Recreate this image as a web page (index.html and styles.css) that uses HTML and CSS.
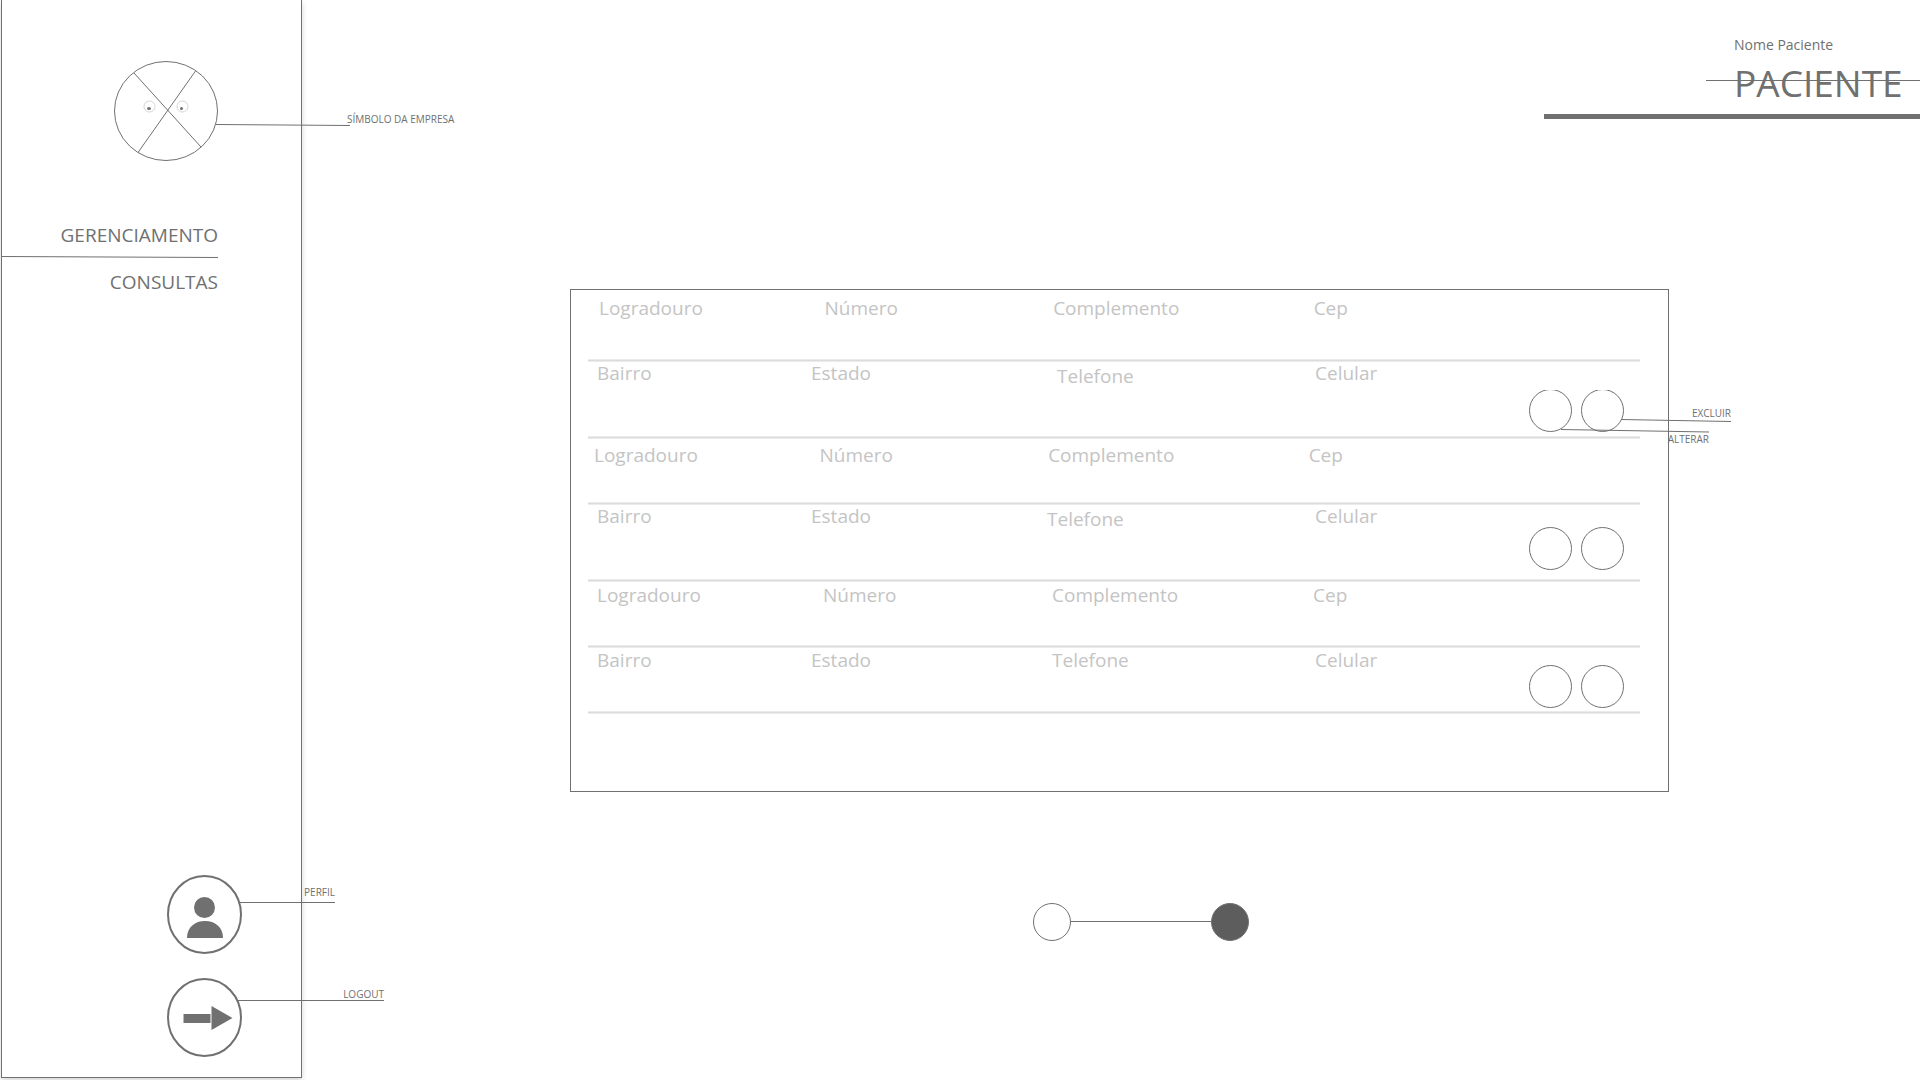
FILE: index.html
```html
<!DOCTYPE html>
<html lang="pt-BR">
<head>
<meta charset="utf-8">
<meta name="viewport" content="width=device-width, initial-scale=1">
<title>Paciente</title>
<link rel="stylesheet" href="styles.css">
</head>
<body>
<aside class="sidebar">
  <div class="brand">
    <svg class="brand-logo" width="104" height="100" viewBox="0 0 104 100" aria-hidden="true">
      <ellipse cx="52" cy="50" rx="51.5" ry="49.5"/>
      <path d="M20 12L87 86M81.500 10L24 91.500"/>
      <circle class="eye" cx="35.500" cy="45.500" r="5.500"/>
      <circle class="eye" cx="68.500" cy="45.500" r="5.500"/>
      <ellipse class="pupil" cx="35" cy="47.500" rx="2" ry="1.500"/>
      <circle class="pupil" cx="67.500" cy="47.500" r="1.500"/>
    </svg>
    <div class="callout callout-brand">
      <svg width="134" height="2" aria-hidden="true"><path d="M0 .5L134 1.500"/></svg>
      <span class="callout-text">SÍMBOLO DA EMPRESA</span>
    </div>
  </div>
  <nav class="menu">
    <a href="#gerenciamento">GERENCIAMENTO</a>
    <svg class="menu-line" viewBox="0 0 216 2" preserveAspectRatio="none" aria-hidden="true"><path d="M0 .5L216 1.500"/></svg>
    <a href="#consultas">CONSULTAS</a>
  </nav>
  <div class="account">
    <div class="account-item">
      <button class="account-button" type="button" aria-label="Perfil">
        <svg width="75" height="79" viewBox="0 0 75 79" aria-hidden="true">
          <ellipse class="ring" cx="37.500" cy="39.500" rx="36.500" ry="38.500"/>
          <circle cx="37.500" cy="32.500" r="10.500"/>
          <path d="M20 63C20 52 28 46 38 46S56 52 56 63Z"/>
        </svg>
      </button>
      <div class="callout callout-profile">
        <svg width="95" height="1" aria-hidden="true"><path d="M0 .5H95"/></svg>
        <span class="callout-text">PERFIL</span>
      </div>
    </div>
    <div class="account-item">
      <button class="account-button" type="button" aria-label="Logout">
        <svg width="75" height="79" viewBox="0 0 75 79" aria-hidden="true">
          <ellipse class="ring" cx="37.500" cy="39.500" rx="36.500" ry="38.500"/>
          <path d="M16.500 36H43.500V45H16.500ZM44.500 28L65.500 40L44.500 52Z"/>
        </svg>
      </button>
      <div class="callout callout-logout">
        <svg width="146" height="1" aria-hidden="true"><path d="M0 .5H146"/></svg>
        <span class="callout-text">LOGOUT</span>
      </div>
    </div>
  </div>
</aside>
<main class="main">
  <header class="header">
    <p class="patient-name">Nome Paciente</p>
    <h1 class="title">PACIENTE</h1>
  </header>
  <section class="panel" aria-label="Endereços">
    <div class="row address first"><span>Logradouro</span><span>Número</span><span>Complemento</span><span>Cep</span></div>
    <div class="row contact first">
      <span>Bairro</span><span>Estado</span><span class="phone">Telefone</span><span>Celular</span>
      <div class="actions">
        <button type="button" aria-label="Alterar"></button>
        <button type="button" aria-label="Excluir"></button>
        <div class="callout callout-delete">
          <svg width="110" height="3" aria-hidden="true"><path d="M0 .5L110 2.500"/></svg>
          <span class="callout-text">EXCLUIR</span>
        </div>
        <div class="callout callout-edit">
          <svg width="148" height="4" aria-hidden="true"><path d="M0 .5L148 3"/></svg>
          <span class="callout-text">ALTERAR</span>
        </div>
      </div>
    </div>
    <div class="row address second"><span>Logradouro</span><span>Número</span><span>Complemento</span><span>Cep</span></div>
    <div class="row contact second">
      <span>Bairro</span><span>Estado</span><span class="phone">Telefone</span><span>Celular</span>
      <div class="actions">
        <button type="button" aria-label="Alterar"></button>
        <button type="button" aria-label="Excluir"></button>
      </div>
    </div>
    <div class="row address third"><span>Logradouro</span><span>Número</span><span>Complemento</span><span>Cep</span></div>
    <div class="row contact third">
      <span>Bairro</span><span>Estado</span><span>Telefone</span><span>Celular</span>
      <div class="actions">
        <button type="button" aria-label="Alterar"></button>
        <button type="button" aria-label="Excluir"></button>
      </div>
    </div>
  </section>
  <nav class="pager" aria-label="Páginas">
    <button type="button" aria-label="Página 1"></button>
    <span class="pager-line"></span>
    <button class="current" type="button" aria-label="Página 2" aria-current="page"></button>
  </nav>
</main>
</body>
</html>
```
FILE: styles.css
```css
* { box-sizing: border-box; }

body {
  margin: 0;
  min-height: 100vh;
  display: grid;
  grid-template-columns: auto 1fr;
  background: #fff;
  color: #707070;
  font-family: "Open Sans", "Noto Sans", sans-serif;
  font-size: 19px;
  line-height: 22px;
}

button {
  padding: 0;
  border: 0;
  background: none;
  cursor: pointer;
}

svg { display: block; }

/* Sidebar */
.sidebar {
  width: 301px;
  margin: 0 0 2px 1px;
  padding: 61px 0 20px;
  display: flex;
  flex-direction: column;
  border: 1px solid #707070;
  border-top: 0;
  box-shadow: 0 3px 6px rgba(0, 0, 0, 0.16);
}

.brand {
  position: relative;
  width: 104px;
  margin-left: 112px;
}

.brand-logo {
  fill: none;
  stroke: #707070;
}

.brand-logo .eye { stroke: #d4d4d4; }

.brand-logo .pupil {
  fill: #707070;
  stroke: none;
}

.menu {
  margin: 63px 83px 0 0;
  display: flex;
  flex-direction: column;
  align-items: flex-end;
}

.menu a {
  color: inherit;
  text-decoration: none;
}

.menu-line {
  width: 100%;
  height: 2px;
  margin: 10px 0 13px;
  stroke: #707070;
}

.account {
  margin: auto 59px 0 auto;
  display: flex;
  flex-direction: column;
  gap: 24px;
}

.account-item { position: relative; }

.account-button {
  display: block;
  fill: #707070;
}

.ring {
  fill: none;
  stroke: #707070;
  stroke-width: 2;
}

/* Notes that point at a control */
.callout {
  position: absolute;
  color: #707070;
  font-size: 10px;
  line-height: 12px;
  white-space: nowrap;
  pointer-events: none;
}

.callout svg { stroke: #707070; }

.callout-text {
  position: absolute;
  right: 0;
  bottom: 100%;
}

.callout-brand { left: 102px; top: 63px; }
.callout-brand .callout-text { left: 131px; right: auto; bottom: 1px; }
.callout-profile { left: 73px; top: 27px; }
.callout-profile .callout-text { bottom: 5px; }
.callout-logout { left: 71px; top: 22px; }
.callout-delete { left: 92px; top: 30px; }
.callout-edit { left: 32px; top: 40px; }
.callout-edit .callout-text { top: 100%; bottom: auto; }

/* Main column */
.main {
  min-width: 0;
  display: flex;
  flex-direction: column;
}

.header {
  width: 376px;
  margin-left: auto;
  padding: 34px 0 11px 190px;
  border-bottom: 5px solid #707070;
  background: linear-gradient(#707070, #707070) right 80px / 214px 1px no-repeat;
}

.patient-name {
  margin: 0;
  font-size: 14px;
}

.title {
  margin: 7px 0 0;
  font-size: 37px;
  line-height: 40px;
  font-weight: 400;
}

.panel {
  margin: 170px 251px 0 268px;
  padding: 0 28px 77px 17px;
  border: 1px solid #707070;
}

.row {
  display: grid;
  align-items: start;
  color: #c4c4c4;
  background:
    linear-gradient(#dcdcdc, #dcdcdc) 0 calc(100% - 1px) / 100% 1px no-repeat,
    linear-gradient(#ebebeb, #ebebeb) 0 100% / 100% 3px no-repeat;
}

.address {
  min-height: 66px;
  grid-template-columns: 226fr 229fr 261fr 327fr;
}

.address.first { min-height: 72px; padding: 7px 0 0 11px; }
.address.second { padding: 5px 5px 0 6px; }
.address.third { padding: 2px 0 0 9px; }
.contact.first { min-height: 77px; padding: 0 0 7px 9px; grid-template-columns: 214fr 246fr 258fr 214fr 111px; }
.contact.second { min-height: 77px; padding: 0 0 12px 9px; grid-template-columns: 214fr 236fr 268fr 214fr 111px; }
.contact.third { min-height: 66px; padding: 1px 0 6px 9px; grid-template-columns: 214fr 241fr 263fr 214fr 111px; }

.phone { padding-top: 3px; }

.actions {
  position: relative;
  align-self: end;
  display: flex;
  gap: 9px;
}

.actions button {
  width: 43px;
  height: 43px;
  border: 1px solid #707070;
  border-radius: 50%;
}

.first .actions button { clip-path: inset(1px 0 0); }

.pager {
  margin: 111px 251px 0 268px;
  padding-left: 42px;
  display: flex;
  justify-content: center;
  align-items: center;
}

.pager button {
  width: 38px;
  height: 38px;
  border: 1px solid #707070;
  border-radius: 50%;
}

.pager .current { background: #5d5d5d; }

.pager-line {
  width: 140px;
  height: 2px;
  border-top: 1px solid #707070;
}
```
